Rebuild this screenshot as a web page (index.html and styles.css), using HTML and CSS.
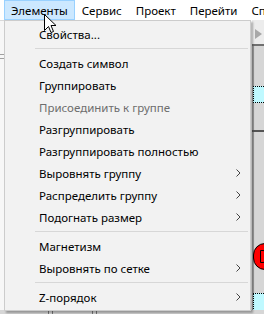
FILE: index.html
```html
<!DOCTYPE html>
<html>
<head>
<meta charset="utf-8">
<link rel="stylesheet" href="styles.css">
</head>
<body>
<div class="menubar">
  <div class="mb-item active">Элементы</div>
  <div class="mb-item">Сервис</div>
  <div class="mb-item">Проект</div>
  <div class="mb-item">Перейти</div>
  <div class="mb-item">Сп</div>
</div>
<div class="workspace">
  <div class="left-strip">
    <div class="lline l1"></div>
    <div class="lline l2"></div>
  </div>
  <div class="canvas">
    <div class="toolbar-row"><span class="tri"></span></div>
    <div class="hline"></div>
    <div class="vbar"></div>
    <div class="node cyan c1"></div>
    <div class="dline"></div>
    <div class="node red"><span class="red-mark"></span></div>
    <div class="node cyan c2"></div>
  </div>
  <div class="bottom-strip">
    <span class="tick t1"></span>
    <span class="tick t2"></span>
  </div>

  <div class="menu">
    <div class="item">Свойства...</div>
    <div class="sep"></div>
    <div class="item">Создать символ</div>
    <div class="item">Группировать</div>
    <div class="item disabled">Присоединить к группе</div>
    <div class="item">Разгруппировать</div>
    <div class="item">Разгруппировать полностью</div>
    <div class="item sub">Выровнять группу<svg class="chev" width="5" height="8" viewBox="0 0 5 8"><polyline points="0.5,0.5 4,4 0.5,7.5" fill="none" stroke="#444" stroke-width="1"/></svg></div>
    <div class="item sub">Распределить группу<svg class="chev" width="5" height="8" viewBox="0 0 5 8"><polyline points="0.5,0.5 4,4 0.5,7.5" fill="none" stroke="#444" stroke-width="1"/></svg></div>
    <div class="item sub">Подогнать размер<svg class="chev" width="5" height="8" viewBox="0 0 5 8"><polyline points="0.5,0.5 4,4 0.5,7.5" fill="none" stroke="#444" stroke-width="1"/></svg></div>
    <div class="sep"></div>
    <div class="item">Магнетизм</div>
    <div class="item sub">Выровнять по сетке<svg class="chev" width="5" height="8" viewBox="0 0 5 8"><polyline points="0.5,0.5 4,4 0.5,7.5" fill="none" stroke="#444" stroke-width="1"/></svg></div>
    <div class="sep"></div>
    <div class="item sub">Z-порядок<svg class="chev" width="5" height="8" viewBox="0 0 5 8"><polyline points="0.5,0.5 4,4 0.5,7.5" fill="none" stroke="#444" stroke-width="1"/></svg></div>
  </div>
</div>
<svg class="cursor" width="13" height="20" viewBox="0 0 13 20"><path d="M0.5,0.5 L0.5,16.5 L4.5,12.5 L7,18.5 L9.5,17.5 L7,11.5 L12,11.5 Z" fill="#fff" stroke="#000" stroke-width="1" stroke-linejoin="miter"/></svg>
</body>
</html>
```
FILE: styles.css
```css
html, body {
  margin: 0;
  padding: 0;
}
body {
  width: 264px;
  height: 314px;
  overflow: hidden;
  position: relative;
  background: #ffffff;
  font-family: "Noto Sans", "Open Sans", sans-serif;
  font-size: 11.5px;
  color: #000;
}
.menubar {
  height: 20px;
  display: flex;
  align-items: stretch;
  padding-left: 4px;
  background: #fff;
  white-space: nowrap;
  overflow: hidden;
}
.mb-item {
  padding: 0 6px;
  display: flex;
  align-items: center;
  border: 1px solid transparent;
  box-sizing: border-box;
}
.mb-item.active {
  background: #cce8ff;
  border-color: #99d1ff;
  padding: 0 6px 0 6px;
}
.workspace {
  position: relative;
  height: 294px;
  background: #ffffff;
}
.left-strip {
  position: absolute;
  left: 0;
  top: 0;
  width: 6px;
  height: 290px;
  background: #f7f7f7;
  border-top: 1px solid #d9d9d9;
}
.lline {
  position: absolute;
  left: 0;
  width: 4px;
  height: 1px;
  background: #a0a0a0;
}
.l1 { top: 33px; }
.l2 { top: 37px; }
.canvas {
  position: absolute;
  left: 252px;
  top: 0;
  width: 12px;
  height: 294px;
  background: #d6d6d6;
}
.toolbar-row {
  height: 24px;
  background: #ececec;
  position: relative;
}
.tri {
  position: absolute;
  left: 3px;
  top: 9px;
  width: 0;
  height: 0;
  border-top: 5px solid transparent;
  border-bottom: 5px solid transparent;
  border-left: 7px solid #a8a8a8;
}
.hline {
  position: absolute;
  left: 0;
  top: 24px;
  width: 12px;
  height: 2px;
  background: #707070;
}
.vbar {
  position: absolute;
  left: 0;
  top: 26px;
  width: 2px;
  height: 268px;
  background: #9a9a9a;
}
.node {
  position: absolute;
  box-sizing: border-box;
}
.cyan {
  background: #bff9ff;
  border-top: 1px dotted #000;
  border-bottom: 1px dotted #000;
  border-left: 1px dotted #000;
}
.c1 { left: 1px; top: 66px; width: 11px; height: 17px; }
.c2 { left: 1px; top: 273px; width: 11px; height: 22px; border-bottom: none; }
.dline {
  position: absolute;
  left: 0;
  top: 110px;
  width: 12px;
  height: 2px;
  background: #555;
}
.red {
  left: 1px;
  top: 223px;
  width: 24px;
  height: 27px;
  background: #ff0000;
  border: 1px solid #000;
  border-radius: 12px;
}
.red-mark {
  position: absolute;
  left: 6px;
  top: 6px;
  width: 8px;
  height: 13px;
  border: 1px solid #000;
  border-radius: 0 5px 5px 0;
  box-sizing: border-box;
}
.bottom-strip {
  position: absolute;
  left: 0;
  top: 290px;
  width: 264px;
  height: 4px;
  background: #d6d6d6;
}
.tick {
  position: absolute;
  top: 0;
  width: 3px;
  height: 4px;
  border-left: 1px solid #777;
  border-right: 1px solid #777;
}
.t1 { left: 48px; }
.t2 { left: 92px; }
.menu {
  position: absolute;
  left: 4px;
  top: 0;
  width: 247px;
  box-sizing: border-box;
  background: #f2f2f2;
  border: 1px solid #cccccc;
  padding: 2px 0;
  box-shadow: 2px 2px 2px rgba(0, 0, 0, 0.3);
  white-space: nowrap;
}
.item {
  height: 22px;
  display: flex;
  align-items: center;
  padding-left: 34px;
  padding-right: 9px;
}
.item.disabled {
  color: #6d6d6d;
}
.chev {
  margin-left: auto;
}
.sep {
  height: 1px;
  background: #d7d7d7;
  margin: 3px 2px 3px 30px;
}
.cursor {
  position: absolute;
  left: 44px;
  top: 14px;
}
```
